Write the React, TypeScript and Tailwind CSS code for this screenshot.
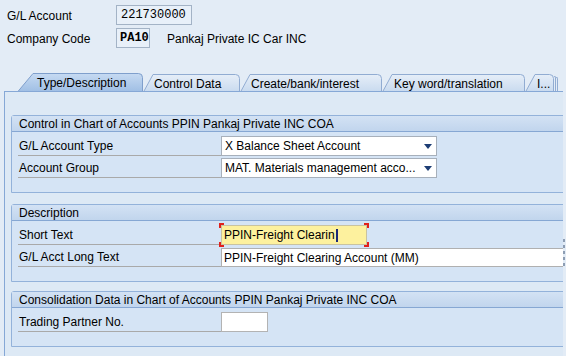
import React from "react";

type TabProps = { label: string; w: number; active?: boolean; slant: number; cls: string; textCls: string; id: string };

function Tab({ label, w, active, slant, cls, textCls, id }: TabProps) {
  const h = active ? 18 : 17;
  const d = `M0.5,${h + 1} L${slant},0.5 L${w - 4.5},0.5 Q${w - 0.5},0.5 ${w - 0.5},4.5 L${w - 0.5},${h + 1}`;
  return (
    <div className={`relative flex items-center ${cls}`}>
      <svg className="absolute inset-0" width={w} height={h} viewBox={`0 0 ${w} ${h}`} preserveAspectRatio="none">
        <defs>
          <linearGradient id={id} x1="0" y1="0" x2="0" y2="1">
            {active ? (
              <>
                <stop offset="0" stopColor="#c6daf2" />
                <stop offset="1" stopColor="#9fbee4" />
              </>
            ) : (
              <>
                <stop offset="0" stopColor="#e6eef8" />
                <stop offset="1" stopColor="#c8daef" />
              </>
            )}
          </linearGradient>
        </defs>
        <path d={d} fill={`url(#${id})`} stroke={active ? "#7f9fcc" : "#91acd2"} strokeWidth="1" />
      </svg>
      <span className={`relative whitespace-nowrap leading-none ${textCls}`}>{label}</span>
    </div>
  );
}

function Group({ title, children, cls }: { title: string; children: React.ReactNode; cls: string }) {
  return (
    <div className={`w-[560px] border border-[#93b2da] rounded-tl-[3px] bg-[#d5e4f5] ${cls}`}>
      <div className="h-[16px] flex items-center pl-[7px] border-b border-[#86a7d3] bg-gradient-to-b from-[#d3e2f4] to-[#c1d5ed] whitespace-nowrap">
        {title}
      </div>
      <div className="pt-[4px] pb-[14px] pl-[6px] flex flex-col gap-[2px]">{children}</div>
    </div>
  );
}

function Row({ label, children }: { label: string; children: React.ReactNode }) {
  return (
    <div className="flex items-end h-[20px]">
      <div className="w-[203px] h-[20px] border-b border-[#a9a9a9] flex items-center pl-[1px] whitespace-nowrap">{label}</div>
      {children}
    </div>
  );
}

function Dropdown({ text }: { text: string }) {
  return (
    <div className="w-[216px] h-[20px] bg-white border border-[#a7b0bb] flex items-center justify-between pl-[3px] pr-[4px]">
      <span className="whitespace-nowrap">{text}</span>
      <svg width="8" height="5" viewBox="0 0 8 5">
        <path d="M0,0 L8,0 L4,5 Z" fill="#1d3d74" />
      </svg>
    </div>
  );
}

function Corner({ cls }: { cls: string }) {
  return <div className={`absolute w-[5px] h-[5px] border-[#e0211c] ${cls}`} />;
}

export default function App() {
  return (
    <div className="relative w-[566px] h-[356px] overflow-hidden bg-[#e3ecf6] text-black text-[12px] font-['Liberation_Sans',Arial,sans-serif]">
      {/* header fields */}
      <div className="pt-[5px] pl-[7px] flex flex-col gap-[3px]">
        <div className="flex items-center h-[20px]">
          <div className="w-[109px] pt-[1px]">G/L Account</div>
          <div className="w-[76px] h-[20px] border border-[#a3b3c6] bg-[#e8f0f9] flex items-center pl-[4px] font-['Liberation_Mono',monospace]">
            221730000
          </div>
        </div>
        <div className="flex items-center h-[20px]">
          <div className="w-[109px] pt-[1px]">Company Code</div>
          <div className="w-[34px] h-[20px] border border-[#a3b3c6] bg-[#e8f0f9] flex items-center pl-[3px] font-['Liberation_Mono',monospace] font-bold">
            PA10
          </div>
          <div className="ml-[17px] pt-[1px] whitespace-nowrap">Pankaj Private IC Car INC</div>
        </div>
      </div>

      {/* tab strip */}
      <div className="mt-[25px] pl-[17px] flex items-end h-[18px]">
        <Tab id="t1" label="Type/Description" w={126} active slant={16} cls="w-[126px] h-[18px]" textCls="pl-[20px] pt-[2px]" />
        <Tab id="t2" label="Control Data" w={97} slant={10} cls="w-[97px] h-[17px]" textCls="pl-[11px] pt-[2px]" />
        <Tab id="t3" label="Create/bank/interest" w={142} slant={10} cls="w-[142px] h-[17px]" textCls="pl-[11px] pt-[2px]" />
        <Tab id="t4" label="Key word/translation" w={143} slant={10} cls="w-[143px] h-[17px]" textCls="pl-[12px] pt-[2px]" />
        <div className="relative w-[33px] h-[17px]">
          <Tab id="t5" label="I..." w={29} slant={10} cls="w-[29px] h-[17px]" textCls="pl-[12px] pt-[2px]" />
          <div className="absolute left-[29px] top-[2px] w-[2px] h-[15px] border-r border-t border-[#91acd2] rounded-tr-[2px]" />
          <div className="absolute left-[31px] top-[3px] w-[2px] h-[14px] border-r border-t border-[#91acd2] rounded-tr-[2px]" />
        </div>
      </div>

      {/* panel */}
      <div className="ml-[4px] w-[559px] h-[300px] overflow-hidden border-t border-l border-[#86a8d6] bg-[#dde9f5] pl-[6px] pt-[23px] flex flex-col">
        <Group title="Control in Chart of Accounts PPIN Pankaj Private INC COA" cls="">
          <Row label="G/L Account Type">
            <Dropdown text="X Balance Sheet Account" />
          </Row>
          <Row label="Account Group">
            <Dropdown text="MAT. Materials management acco..." />
          </Row>
        </Group>

        <Group title="Description" cls="mt-[11px]">
          <Row label="Short Text">
            <div className="relative w-[146px] h-[20px]">
              <div className="w-full h-full bg-[#fdf19e] border border-[#c9c3a0] flex items-center pl-[2px]">
                <span className="whitespace-nowrap">PPIN-Freight Clearin</span>
                <span className="ml-[1px] w-[2px] h-[13px] bg-[#1a2a78]" />
              </div>
              <Corner cls="-left-[2px] -top-[2px] border-l-2 border-t-2" />
              <Corner cls="-right-[2px] -top-[2px] border-r-2 border-t-2" />
              <Corner cls="-left-[2px] -bottom-[2px] border-l-2 border-b-2" />
              <Corner cls="-right-[2px] -bottom-[2px] border-r-2 border-b-2" />
            </div>
          </Row>
          <Row label="G/L Acct Long Text">
            <div className="w-[345px] h-[19px] bg-white border border-[#b0b0b0] flex items-center pl-[2px] whitespace-nowrap">
              PPIN-Freight Clearing Account (MM)
            </div>
          </Row>
        </Group>

        <Group title="Consolidation Data in Chart of Accounts PPIN Pankaj Private INC COA" cls="mt-[9px]">
          <Row label="Trading Partner No.">
            <div className="w-[47px] h-[20px] bg-white border border-[#b3b3b3]" />
          </Row>
        </Group>
      </div>

      {/* scroll marker */}
      <div className="absolute left-[563px] top-[239px] flex flex-col gap-[3px]">
        <div className="w-[2px] h-[3px] bg-[#8d9db3]" />
        <div className="w-[2px] h-[3px] bg-[#8d9db3]" />
        <div className="w-[2px] h-[3px] bg-[#8d9db3]" />
        <div className="w-[2px] h-[3px] bg-[#8d9db3]" />
        <div className="w-[2px] h-[3px] bg-[#8d9db3]" />
      </div>
    </div>
  );
}
